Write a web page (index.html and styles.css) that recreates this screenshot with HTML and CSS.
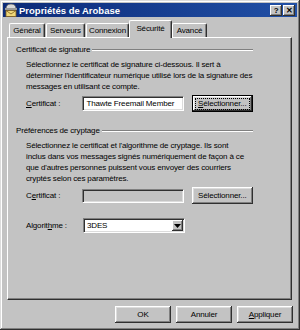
FILE: index.html
```html
<!DOCTYPE html>
<html lang="fr">
<head>
    <meta charset="UTF-8">
    <meta name="viewport" content="width=device-width, initial-scale=1.0">
    <title>Propriétés de Arobase</title>
    <link rel="stylesheet" href="styles.css">
</head>
<body>
    <div class="window">
        <div class="titlebar">
            <span class="app-icon">
                <svg width="14" height="14" viewBox="0 0 14 14">
                    <path d="M2 6 Q2 1 7 1 Q12 1 12 6 Z" fill="#d8d8d8" stroke="#606060" stroke-width="0.8"/>
                    <rect x="1" y="5" width="12" height="2" fill="#9a9a9a"/>
                    <rect x="2" y="7.5" width="10" height="6" fill="#f0d878" stroke="#806020" stroke-width="0.8"/>
                    <path d="M2 7.5 L7 11 L12 7.5" fill="none" stroke="#806020" stroke-width="0.8"/>
                </svg>
            </span>
            <span class="title">Propriétés de Arobase</span>
            <span class="caption-buttons">
                <span class="caption-btn">?</span>
                <span class="caption-btn">&#x2715;</span>
            </span>
        </div>

        <div class="tabs">
            <div class="tab t-general">Général</div>
            <div class="tab t-serveurs">Serveurs</div>
            <div class="tab t-connexion">Connexion</div>
            <div class="tab t-securite active">Sécurité</div>
            <div class="tab t-avance">Avancé</div>
        </div>

        <div class="panel">
            <div class="group-title"><span>Certificat de signature</span></div>
            <p class="desc">Sélectionnez le certificat de signature ci-dessous. Il sert à<br>déterminer l'identificateur numérique utilisé lors de la signature des<br>messages en utilisant ce compte.</p>
            <div class="row">
                <label class="field-label"><u>C</u>ertificat :</label>
                <div class="field">Thawte Freemail Member</div>
                <button class="btn default"><span class="focus"><u>S</u>électionner...</span></button>
            </div>

            <div class="group-title second"><span>Préférences de cryptage</span></div>
            <p class="desc">Sélectionnez le certificat et l'algorithme de cryptage. Ils sont<br>inclus dans vos messages signés numériquement de façon à ce<br>que d'autres personnes puissent vous envoyer des courriers<br>cryptés selon ces paramètres.</p>
            <div class="row">
                <label class="field-label">C<u>e</u>rtificat :</label>
                <div class="field disabled"></div>
                <button class="btn">Sélectionner...</button>
            </div>
            <div class="row algo">
                <label class="field-label">Algorit<u>h</u>me :</label>
                <div class="field select">
                    <span>3DES</span>
                    <span class="drop"><svg width="7" height="4" viewBox="0 0 7 4"><path d="M0 0 H7 L3.5 4 Z" fill="#000"/></svg></span>
                </div>
            </div>
        </div>

        <div class="footer">
            <button class="btn wide">OK</button>
            <button class="btn wide">Annuler</button>
            <button class="btn wide"><u>A</u>ppliquer</button>
        </div>
    </div>
</body>
</html>
```

FILE: styles.css
```css
body {
    margin: 0;
    font-family: "Liberation Sans", Arial, sans-serif;
    font-size: 8px;
    letter-spacing: -0.15px;
    color: #000;
    background: #c3c3c3;
}
.window {
    width: 300px;
    height: 330px;
    box-sizing: border-box;
    padding: 3px;
    background: #c3c3c3;
    /* classic raised frame */
    box-shadow: inset -1px -1px #303030, inset 1px 1px #dcdcdc, inset -2px -2px #808080, inset 2px 2px #ffffff;
}
.titlebar {
    height: 14px;
    display: flex;
    align-items: center;
    background: linear-gradient(to right, #0c2a78, #2150a6);
    color: #fff;
}
.app-icon {
    width: 15px;
    display: flex;
    justify-content: center;
}
.title {
    flex: 1;
    font-size: 9.5px;
    font-weight: bold;
    letter-spacing: 0;
    padding-left: 1px;
}
.caption-buttons {
    display: flex;
    gap: 1px;
    margin-right: 2px;
}
.caption-btn {
    width: 12px;
    height: 11px;
    box-sizing: border-box;
    background: #c3c3c3;
    color: #000;
    font-size: 8px;
    font-weight: bold;
    line-height: 11px;
    text-align: center;
    box-shadow: inset -1px -1px #303030, inset 1px 1px #ffffff, inset -2px -2px #808080;
}

/* tab strip */
.tabs {
    display: flex;
    align-items: flex-end;
    height: 17px;
    margin: 3px 0 0 5px;
    position: relative;
    z-index: 1;
}
.tab {
    height: 14px;
    box-sizing: border-box;
    line-height: 13px;
    text-align: center;
    border-top: 1px solid #fff;
    border-left: 1px solid #fff;
    border-right: 1px solid #303030;
    border-radius: 2px 2px 0 0;
    box-shadow: inset -1px 0 #808080;
    margin-left: 1px;
}
.t-general { width: 36px; }
.t-serveurs { width: 39px; }
.t-connexion { width: 43px; }
.t-securite { width: 43px; }
.t-avance { width: 35px; }
.tab.active {
    height: 18px;
    margin: 0 -1px -1px 0;
    line-height: 15px;
    background: #c3c3c3;
}

.panel {
    height: 263px;
    margin: 0 5px 0 4px;
    box-sizing: border-box;
    padding: 6px 38px 0 8px;
    border-top: 1px solid #fff;
    border-left: 1px solid #fff;
    border-right: 1px solid #303030;
    border-bottom: 1px solid #303030;
    box-shadow: inset -1px -1px #808080;
}
.group-title {
    display: flex;
    align-items: center;
    height: 11px;
    line-height: 11px;
}
.group-title::after {
    content: "";
    flex: 1;
    height: 0;
    border-top: 1px solid #808080;
    border-bottom: 1px solid #fff;
    margin-left: 2px;
}
.group-title.second {
    margin-top: 13px;
}
.desc {
    margin: 4px 0 0 10px;
    line-height: 11px;
    white-space: nowrap;
}
.row {
    display: flex;
    align-items: center;
    margin: 3px 0 0 10px;
    height: 17px;
}
.row.algo {
    margin-top: 13px;
}
.field-label {
    width: 57px;
}
.field {
    width: 102px;
    height: 15px;
    box-sizing: border-box;
    padding: 0 3px;
    line-height: 13px;
    background: #fff;
    border-top: 1px solid #808080;
    border-left: 1px solid #808080;
    border-right: 1px solid #fff;
    border-bottom: 1px solid #fff;
    box-shadow: inset 1px 1px #303030, inset -1px -1px #dcdcdc;
    white-space: nowrap;
    overflow: hidden;
}
.field.disabled {
    background: #c3c3c3;
    height: 14px;
}
.field.select {
    display: flex;
    align-items: center;
    padding-right: 1px;
}
.field.select span:first-child {
    flex: 1;
}
.drop {
    width: 11px;
    height: 11px;
    display: flex;
    align-items: center;
    justify-content: center;
    background: #c3c3c3;
    box-shadow: inset -1px -1px #303030, inset 1px 1px #ffffff, inset -2px -2px #808080;
}
.btn {
    height: 17px;
    width: 62px;
    margin-left: 8px;
    padding: 0;
    font-family: inherit;
    font-size: 8px;
    letter-spacing: -0.15px;
    color: #000;
    background: #c3c3c3;
    border: none;
    box-shadow: inset -1px -1px #303030, inset 1px 1px #ffffff, inset -2px -2px #808080, inset 2px 2px #dcdcdc;
}
.btn.default {
    border: 1px solid #000;
}
.btn .focus {
    display: inline-block;
    padding: 0 2px;
    line-height: 10px;
    outline: 1px dotted #000;
}
.footer {
    display: flex;
    justify-content: flex-end;
    gap: 5px;
    margin: 6px 4px 0 0;
}
.btn.wide {
    width: 56px;
    margin-left: 0;
}
```
